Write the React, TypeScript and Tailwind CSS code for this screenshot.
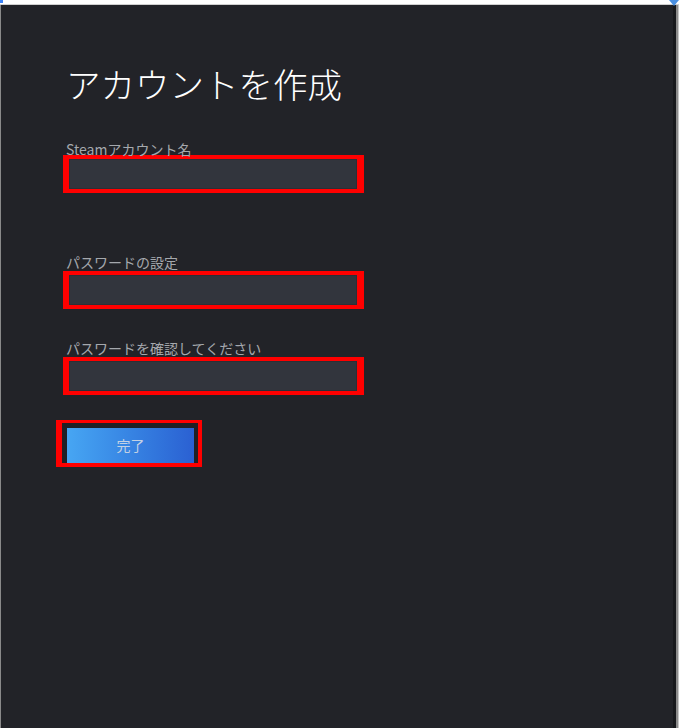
import React from "react";

const font = { fontFamily: '"Noto Sans CJK JP", "Noto Sans", sans-serif' };

function Field({ label, mt, lh }: { label: string; mt: string; lh: string }) {
  return (
    <div className={mt}>
      <div className={`ml-[65px] ${lh} text-[14px] leading-[14px] text-[#a5a8ad] whitespace-nowrap`}>{label}</div>
      <div className="ml-[62px] w-[301px] h-[38px] border-l-[6px] border-r-[7px] border-y-4 border-[#ff0000]">
        <div className="h-full w-full bg-[#32353d] border border-[#2c2f36]" />
      </div>
    </div>
  );
}

export default function App() {
  return (
    <div className="w-[679px] h-[728px] bg-white pt-[4px] relative overflow-hidden" style={font}>
      <div className="absolute left-0 top-0 w-[3px] h-[3px] bg-[#3b82f6]" />
      <div className="absolute right-0 top-0 w-0 h-0 border-l-[5px] border-r-[5px] border-t-[6px] border-l-transparent border-r-transparent border-t-[#4a90e2]" />
      <div className="flex h-[724px] border-t border-[#d0d0d0]">
        <div className="w-[1px] bg-[#8a8a8a]" />
        <div className="flex-1 bg-[#222328] flex flex-col pt-[58px]">
          <h1 className="ml-[65px] text-[34.5px] leading-[40px] font-light text-white whitespace-nowrap">アカウントを作成</h1>
          <Field label="Steamアカウント名" mt="mt-[39px]" lh="h-[13px]" />
          <Field label="パスワードの設定" mt="mt-[62px]" lh="h-[16px]" />
          <Field label="パスワードを確認してください" mt="mt-[32px]" lh="h-[16px]" />
          <div className="mt-[25px] ml-[55px] w-[146px] h-[47px] border-l-[6px] border-r-4 border-t-[3px] border-b-4 border-[#ff0000] bg-[#1f2025] pl-[5px] pr-[4px] pt-[5px]">
            <div className="h-full w-full bg-gradient-to-r from-[#47a6f3] to-[#2b60d2] flex items-center justify-center text-[14px] text-[#c3d1e4]">
              完了
            </div>
          </div>
        </div>
        <div className="w-[3px] bg-[#18191c]" />
        <div className="w-[2px] bg-[#8c8c8c]" />
        <div className="w-[1px] bg-[#c8c8c8]" />
      </div>
    </div>
  );
}
